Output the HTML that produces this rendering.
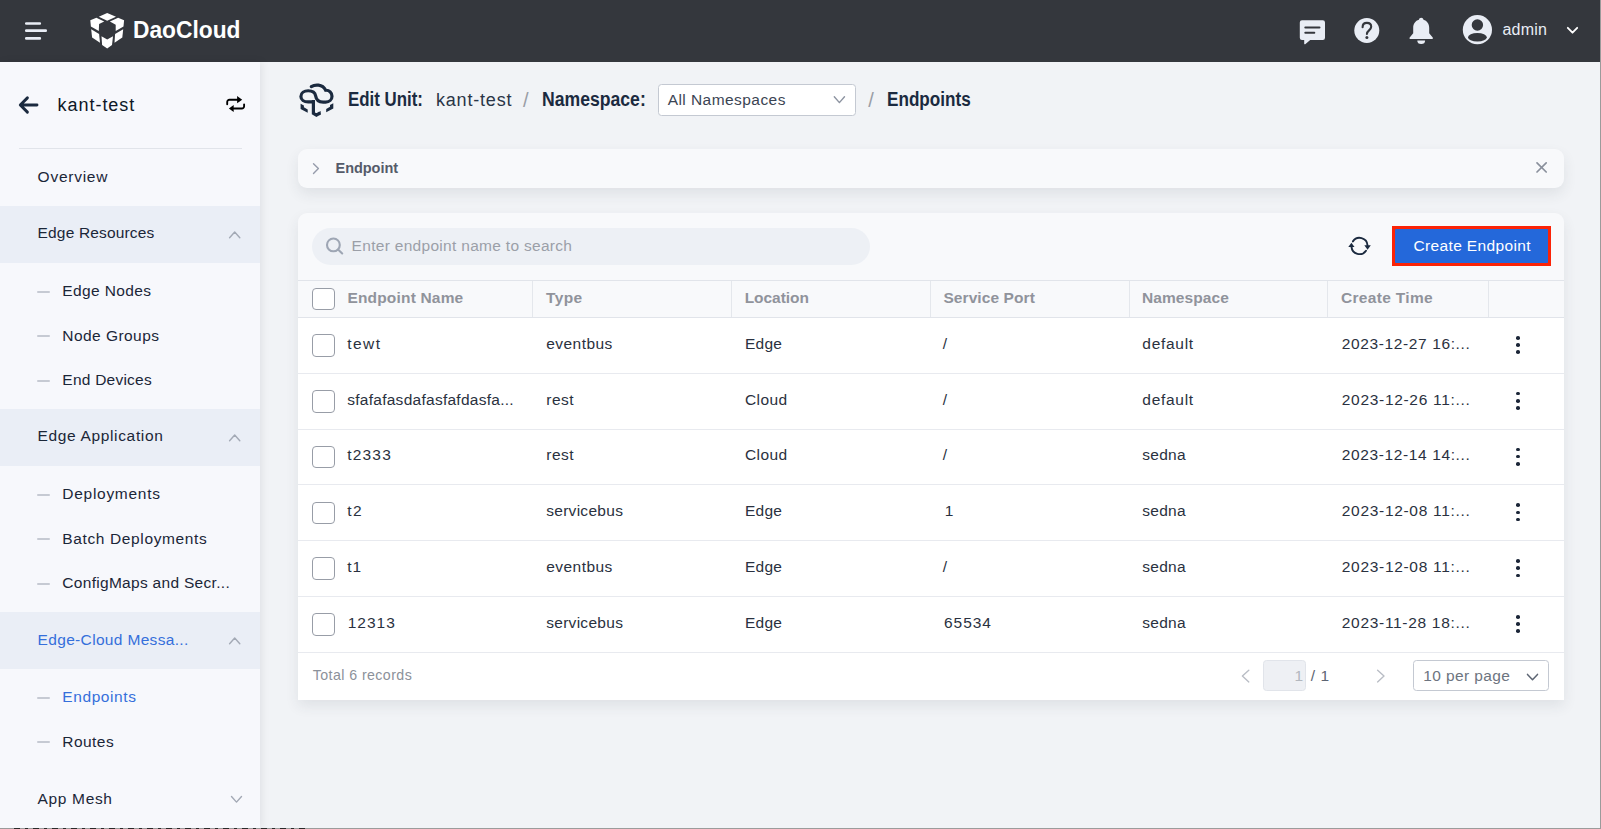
<!DOCTYPE html>
<html lang="en"><head><meta charset="utf-8"><title>Endpoints - DaoCloud</title>
<style>
html,body{margin:0;padding:0}
body{width:1601px;height:829px;overflow:hidden;position:relative;background:#f1f3f6;font-family:"Liberation Sans",sans-serif}
.a{position:absolute;box-sizing:border-box}
.t{position:absolute;white-space:pre;line-height:20px;height:20px}
svg{position:absolute;overflow:visible}
#hdr{left:0;top:0;width:1600px;height:62px;background:#34373d}
#side{left:0;top:62px;width:260px;height:766px;background:#f7f8fc;box-shadow:2px 0 8px rgba(20,20,30,.075)}
.band{left:0;width:260px;height:57px;background:#eaeef6}
.dash{width:13px;height:2.4px;border-radius:1.2px;background:#c6cad3}
.card{left:298px;width:1266px;background:#f8f9fb}
.cb{left:312px;width:23px;height:22.5px;border:1px solid #989da7;border-radius:4px;background:#fff}
.hl{background:#e3e6ec}
.dots i{position:absolute;left:0;width:3.6px;height:3.6px;border-radius:50%;background:#1b2638}

</style></head><body>
<div class="a" id="hdr"></div>
<div class="a" id="side"></div>
<div class="a" style="left:1600px;top:0;width:1px;height:829px;background:#9b9b9b"></div>
<div class="a" style="left:0;top:828px;width:1601px;height:1px;background:#9b9b9b"></div>
<div class="a" style="left:14px;top:828px;width:291px;height:1px;background:repeating-linear-gradient(90deg,#2a2a2a 0 6px,#9b9b9b 6px 11px,#2a2a2a 11px 14px,#9b9b9b 14px 19px)"></div>
<svg style="left:0;top:0" width="62" height="62" viewBox="0 0 62 62"><g stroke="#e9edf5" stroke-width="2.7" stroke-linecap="round"><path d="M26.3 23.5H39.8M26.3 30.7H45.7M26.3 38.4H39.8"/></g></svg>
<svg style="left:0;top:0" width="140" height="62" viewBox="0 0 140 62"><g fill="#fff"><polygon points="98.8,16.7 107.2,12.9 116,16.7 107.2,20.8"/><polygon points="90.3,20.2 96.4,17.8 104.2,21.4 99.1,24.1 98.8,31 90.9,26.5"/><polygon points="124.1,20.2 118.1,17.8 109.9,21.4 115.7,24.7 115.7,31 123.5,26.5"/><polygon points="91.2,29.2 99.1,34 100,42.8 92.1,37.4"/><polygon points="123.2,29.2 115.1,34 114.5,42.8 122.3,37.4"/><polygon points="101.5,36.2 107.2,39.5 113,36.2 112,44.9 107.2,48.5 102.1,44.9"/></g></svg>
<svg style="left:1290px;top:0" width="310" height="62" viewBox="1290 0 310 62"><path fill="#e9edf5" d="M1302 20.2h20.8a2.2 2.2 0 0 1 2.2 2.2v15.400a2.2 2.2 0 0 1-2.2 2.2h-12.600l-5 4.200a.6.6 0 0 1-1-.5V40h-2.200a2.2 2.2 0 0 1-2.200-2.200V22.400a2.2 2.2 0 0 1 2.200-2.200z"/><path stroke="#34373d" stroke-width="2" stroke-linecap="round" d="M1305.300 27.500h14.200M1305.300 32.800h9"/><circle cx="1366.800" cy="30.500" r="12.500" fill="#e9edf5"/><path fill="none" stroke="#34373d" stroke-width="2.100" stroke-linecap="round" d="M1362.600 27.200c0-2.600 1.800-4.300 4.300-4.300 2.500 0 4.300 1.600 4.300 3.900 0 3.300-4.300 3.800-4.300 7.100"/><circle cx="1366.900" cy="37.600" r="1.500" fill="#34373d"/><path fill="#e9edf5" d="M1421.200 17.800c1.200 0 2.100.8 2.300 1.900 3.500 1 5.700 4.100 5.700 8v5.600l3.500 4.200c.5.700.1 1.600-.8 1.600h-21.400c-.9 0-1.300-.9-.8-1.600l3.500-4.200v-5.600c0-3.900 2.200-7 5.700-8 .2-1.100 1.100-1.900 2.300-1.900z"/><path fill="#e9edf5" d="M1417.300 40.500h7.800a3.900 3.600 0 0 1-7.800 0z"/><circle cx="1477.400" cy="29.700" r="14.600" fill="#e9edf5"/><circle cx="1477.400" cy="25" r="5.700" fill="#34373d"/><ellipse cx="1477.400" cy="37.300" rx="9.400" ry="4.300" fill="#34373d"/><path fill="none" stroke="#fff" stroke-width="1.800" stroke-linecap="round" stroke-linejoin="round" d="M1567.800 27.800l4.700 4.900 4.700-4.900"/></svg>
<div class="a" style="left:19px;top:147.500px;width:223px;height:1px;background:#e1e4ea"></div>
<div class="a band" style="top:206px"></div>
<div class="a band" style="top:409px"></div>
<div class="a band" style="top:612px"></div>
<div class="a dash" style="left:37px;top:290.6px"></div>
<div class="a dash" style="left:37px;top:335.1px"></div>
<div class="a dash" style="left:37px;top:379.5px"></div>
<div class="a dash" style="left:37px;top:493.6px"></div>
<div class="a dash" style="left:37px;top:538.1px"></div>
<div class="a dash" style="left:37px;top:582.5px"></div>
<div class="a dash" style="left:37px;top:696.6px"></div>
<div class="a dash" style="left:37px;top:741.1px"></div>
<svg style="left:0;top:62px" width="260" height="766" viewBox="0 62 260 766"><path fill="none" stroke="#1b2a3f" stroke-width="2.9" stroke-linecap="round" stroke-linejoin="round" d="M37 105H20.400M27.400 97.900L20.300 105l7.100 7.100"/><g fill="none" stroke="#000" stroke-width="1.850" stroke-linecap="round"><path d="M227.200 104.200v-2.200a2.300 2.300 0 0 1 2.300-2.300h8"/><path d="M244.100 104.300v1.900a2.300 2.300 0 0 1-2.300 2.300h-8"/></g><polygon fill="#000" points="237.100,96.100 242.200,99.700 237.100,103.200"/><polygon fill="#000" points="233.700,105 228.900,108.500 233.700,112"/><path fill="none" stroke="#a3a9b5" stroke-width="1.400" stroke-linecap="round" stroke-linejoin="round" d="M229.600 237.7l5.100-5.700 5.100 5.700"/><path fill="none" stroke="#a3a9b5" stroke-width="1.400" stroke-linecap="round" stroke-linejoin="round" d="M229.600 440.7l5.100-5.700 5.100 5.700"/><path fill="none" stroke="#a3a9b5" stroke-width="1.400" stroke-linecap="round" stroke-linejoin="round" d="M229.600 643.7l5.100-5.700 5.100 5.700"/><path fill="none" stroke="#a3a9b5" stroke-width="1.400" stroke-linecap="round" stroke-linejoin="round" d="M231.500 796.500l5 5.600 5-5.600"/></svg>
<svg style="left:290px;top:76px" width="60" height="50" viewBox="290 76 60 50"><g fill="none" stroke="#1b2a3f" stroke-width="3.200"><path stroke-linecap="round" transform="translate(0,0.6) scale(1,0.985)" transform-origin="316 101" d="M311.300 85.800C313.500 84.400 316 84 318.500 84.300c3.200.4 5.800 2.400 7.200 5.200 3.500-.3 6.300 2.600 6.300 6 0 3.500-2.800 6-6.300 6h-2.500c-4 0-7-2.400-7.600-6.500-.6-3.400-3.100-5-7.400-5-3.900 0-7.300 2.100-7.300 5.700 0 3.500 3.200 5.600 7.300 5.600h4.600"/><path d="M313.400 100v13.300l3 1.800 3.700-2.300"/></g><g fill="#1b2a3f"><polygon points="300.600,103.800 303.900,105.600 303.900,107.300 307.700,109.400 307.700,112.800 300.600,108.900"/><polygon points="333.300,103.300 330,105.100 330,106.800 326.200,108.900 326.200,112.300 333.300,108.400"/><polygon points="318.800,112.200 320.700,111.100 320.700,114.500 318.800,115.600"/></g></svg>
<div class="a" style="left:658px;top:84px;width:198px;height:32px;border:1px solid #c4c9d2;border-radius:3.500px;background:#fff"></div>
<svg style="left:830px;top:92px" width="20" height="16" viewBox="830 92 20 16"><path fill="none" stroke="#8d94a1" stroke-width="1.400" stroke-linecap="round" stroke-linejoin="round" d="M834.300 96.700l5.100 5.900 5.100-5.900"/></svg>
<div class="a card" style="top:149px;height:39px;border-radius:9px;box-shadow:0 6px 14px rgba(40,50,70,.09)"></div>
<svg style="left:305px;top:155px" width="30" height="30" viewBox="305 155 30 30"><path fill="none" stroke="#969cab" stroke-width="1.400" stroke-linecap="round" stroke-linejoin="round" d="M313.500 163.700l4.900 4.900-4.900 4.900"/></svg>
<svg style="left:1530px;top:155px" width="30" height="30" viewBox="1530 155 30 30"><path fill="none" stroke="#8a909c" stroke-width="1.700" stroke-linecap="round" d="M1537 162.800l9.200 9.200M1546.200 162.800l-9.200 9.200"/></svg>
<div class="a card" style="top:213px;height:487px;border-radius:9px 9px 0 0;box-shadow:0 6px 14px rgba(40,50,70,.09)"></div>
<div class="a" style="left:312px;top:228px;width:558px;height:37px;border-radius:18.500px;background:#edf0f5"></div>
<svg style="left:320px;top:232px" width="30" height="30" viewBox="320 232 30 30"><g fill="none" stroke="#9ea6b4" stroke-width="2.100" stroke-linecap="round"><circle cx="333.400" cy="244.900" r="6.400"/><path d="M338.300 249.800l3.900 3.700"/></g></svg>
<svg style="left:1340px;top:228px" width="40" height="36" viewBox="1340 228 40 36"><g fill="none" stroke="#1b2a3f" stroke-width="1.900" stroke-linecap="round"><path d="M1352.900 241.400A8 8 0 0 1 1367.500 245.400"/><path d="M1366 250.700A8 8 0 0 1 1351.500 246.800"/></g><polygon fill="#1b2a3f" points="1364.300,245.200 1370.800,245.200 1367.600,249.700"/><polygon fill="#1b2a3f" points="1348.300,246.900 1354.500,246.900 1351.400,242.700"/></svg>
<div class="a" style="left:1392px;top:226px;width:159px;height:40px;background:#fb2307"></div>
<div class="a" style="left:1395px;top:229px;width:153px;height:34px;background:#2468da;border-radius:1px"></div>
<div class="a" style="left:298px;top:280px;width:1266px;height:38px;background:#f8f9fb;border-top:1px solid #e1e4ea;border-bottom:1px solid #e1e4ea"></div>
<div class="a" style="left:532px;top:281px;width:1px;height:36px;background:#e4e7ec"></div>
<div class="a" style="left:731px;top:281px;width:1px;height:36px;background:#e4e7ec"></div>
<div class="a" style="left:930px;top:281px;width:1px;height:36px;background:#e4e7ec"></div>
<div class="a" style="left:1128.5px;top:281px;width:1px;height:36px;background:#e4e7ec"></div>
<div class="a" style="left:1327px;top:281px;width:1px;height:36px;background:#e4e7ec"></div>
<div class="a" style="left:1488px;top:281px;width:1px;height:36px;background:#e4e7ec"></div>
<div class="a" style="left:298px;top:318px;width:1266px;height:382px;background:#fff"></div>
<div class="a" style="left:298px;top:372.7px;width:1266px;height:1px;background:#e8eaef"></div>
<div class="a" style="left:298px;top:428.5px;width:1266px;height:1px;background:#e8eaef"></div>
<div class="a" style="left:298px;top:484.3px;width:1266px;height:1px;background:#e8eaef"></div>
<div class="a" style="left:298px;top:540.1px;width:1266px;height:1px;background:#e8eaef"></div>
<div class="a" style="left:298px;top:595.9px;width:1266px;height:1px;background:#e8eaef"></div>
<div class="a" style="left:298px;top:651.7px;width:1266px;height:1px;background:#e8eaef"></div>
<div class="a cb" style="top:287.700px"></div>
<div class="a cb" style="top:334.2px"></div>
<div class="a dots" style="left:1516.200px;top:336.0px;width:4px;height:18px"><i style="top:0"></i><i style="top:7.200px"></i><i style="top:14.400px"></i></div>
<div class="a cb" style="top:390.0px"></div>
<div class="a dots" style="left:1516.200px;top:391.8px;width:4px;height:18px"><i style="top:0"></i><i style="top:7.200px"></i><i style="top:14.400px"></i></div>
<div class="a cb" style="top:445.8px"></div>
<div class="a dots" style="left:1516.200px;top:447.6px;width:4px;height:18px"><i style="top:0"></i><i style="top:7.200px"></i><i style="top:14.400px"></i></div>
<div class="a cb" style="top:501.6px"></div>
<div class="a dots" style="left:1516.200px;top:503.4px;width:4px;height:18px"><i style="top:0"></i><i style="top:7.200px"></i><i style="top:14.400px"></i></div>
<div class="a cb" style="top:557.4px"></div>
<div class="a dots" style="left:1516.200px;top:559.2px;width:4px;height:18px"><i style="top:0"></i><i style="top:7.200px"></i><i style="top:14.400px"></i></div>
<div class="a cb" style="top:613.2px"></div>
<div class="a dots" style="left:1516.200px;top:615.0px;width:4px;height:18px"><i style="top:0"></i><i style="top:7.200px"></i><i style="top:14.400px"></i></div>
<svg style="left:1235px;top:660px" width="160" height="32" viewBox="1235 660 160 32"><g fill="none" stroke="#b9bdc5" stroke-width="1.400" stroke-linecap="round" stroke-linejoin="round"><path d="M1248.800 670.300l-6.400 5.800 6.400 5.800"/><path d="M1377.600 670.300l6.400 5.800-6.400 5.800"/></g></svg>
<div class="a" style="left:1263.400px;top:660.300px;width:42.300px;height:31.200px;border:1px solid #e1e4ea;border-radius:3.500px;background:#eef0f4"></div>
<div class="a" style="left:1413.200px;top:660.300px;width:135.500px;height:31.200px;border:1px solid #c4c9d2;border-radius:3.500px;background:#fff"></div>
<svg style="left:1520px;top:668px" width="24" height="16" viewBox="1520 668 24 16"><path fill="none" stroke="#5d6573" stroke-width="1.500" stroke-linecap="round" stroke-linejoin="round" d="M1527.500 674.400l5 5.300 5-5.300"/></svg>
<!-- text layer -->
<div class="t" style="left:133.0px;top:19.8px;font-size:24.6px;color:#ffffff;font-weight:700;transform:scaleX(0.9257);transform-origin:0 0;">DaoCloud</div>
<div class="t" style="left:1502.4px;top:19.6px;font-size:16px;color:#e9edf5;letter-spacing:0.24px;">admin</div>
<div class="t" style="left:57.6px;top:94.7px;font-size:18px;color:#0e1726;letter-spacing:0.96px;">kant-test</div>
<div class="t" style="left:37.6px;top:166.5px;font-size:15.5px;color:#1b2638;letter-spacing:0.74px;">Overview</div>
<div class="t" style="left:37.6px;top:223.0px;font-size:15.5px;color:#1b2638;letter-spacing:0.16px;">Edge Resources</div>
<div class="t" style="left:62.3px;top:280.7px;font-size:15.5px;color:#1b2638;letter-spacing:0.38px;">Edge Nodes</div>
<div class="t" style="left:62.3px;top:325.9px;font-size:15.5px;color:#1b2638;letter-spacing:0.45px;">Node Groups</div>
<div class="t" style="left:62.3px;top:369.6px;font-size:15.5px;color:#1b2638;letter-spacing:0.24px;">End Devices</div>
<div class="t" style="left:37.6px;top:426.0px;font-size:15.5px;color:#1b2638;letter-spacing:0.65px;">Edge Application</div>
<div class="t" style="left:62.3px;top:483.7px;font-size:15.5px;color:#1b2638;letter-spacing:0.72px;">Deployments</div>
<div class="t" style="left:62.3px;top:529.0px;font-size:15.5px;color:#1b2638;letter-spacing:0.63px;">Batch Deployments</div>
<div class="t" style="left:62.3px;top:572.6px;font-size:15.5px;color:#1b2638;letter-spacing:0.30px;">ConfigMaps and Secr...</div>
<div class="t" style="left:37.6px;top:629.9px;font-size:15.5px;color:#356fdb;letter-spacing:0.33px;">Edge-Cloud Messa...</div>
<div class="t" style="left:62.3px;top:686.6px;font-size:15.5px;color:#356fdb;letter-spacing:0.59px;">Endpoints</div>
<div class="t" style="left:62.3px;top:732.1px;font-size:15.5px;color:#1b2638;letter-spacing:0.45px;">Routes</div>
<div class="t" style="left:37.6px;top:788.8px;font-size:15.5px;color:#1b2638;letter-spacing:0.65px;">App Mesh</div>
<div class="t" style="left:347.8px;top:88.9px;font-size:19.5px;color:#1b2a40;font-weight:700;transform:scaleX(0.8643);transform-origin:0 0;">Edit Unit:</div>
<div class="t" style="left:436.0px;top:89.6px;font-size:18px;color:#2a3547;letter-spacing:0.80px;">kant-test</div>
<div class="t" style="left:522.9px;top:89.5px;font-size:20px;color:#9a9ea6;">/</div>
<div class="t" style="left:541.9px;top:88.9px;font-size:19.5px;color:#1b2a40;font-weight:700;transform:scaleX(0.9033);transform-origin:0 0;">Namespace:</div>
<div class="t" style="left:667.7px;top:89.7px;font-size:15.5px;color:#3b4453;letter-spacing:0.44px;">All Namespaces</div>
<div class="t" style="left:868.3px;top:89.5px;font-size:20px;color:#9a9ea6;">/</div>
<div class="t" style="left:887.3px;top:88.9px;font-size:19.5px;color:#1b2a40;font-weight:700;transform:scaleX(0.8780);transform-origin:0 0;">Endpoints</div>
<div class="t" style="left:335.5px;top:158.3px;font-size:14.5px;color:#555b69;font-weight:700;letter-spacing:-0.04px;">Endpoint</div>
<div class="t" style="left:351.6px;top:236.3px;font-size:15.5px;color:#9b9fa8;letter-spacing:0.30px;">Enter endpoint name to search</div>
<div class="t" style="left:1413.4px;top:235.9px;font-size:15.5px;color:#ffffff;letter-spacing:0.37px;">Create Endpoint</div>
<div class="t" style="left:347.4px;top:288.1px;font-size:15.5px;color:#90939b;font-weight:700;letter-spacing:0.18px;">Endpoint Name</div>
<div class="t" style="left:546.0px;top:288.1px;font-size:15.5px;color:#90939b;font-weight:700;letter-spacing:0.37px;">Type</div>
<div class="t" style="left:744.7px;top:288.1px;font-size:15.5px;color:#90939b;font-weight:700;letter-spacing:-0.04px;">Location</div>
<div class="t" style="left:943.4px;top:288.1px;font-size:15.5px;color:#90939b;font-weight:700;letter-spacing:0.09px;">Service Port</div>
<div class="t" style="left:1142.0px;top:288.1px;font-size:15.5px;color:#90939b;font-weight:700;letter-spacing:0.09px;">Namespace</div>
<div class="t" style="left:1341.0px;top:288.1px;font-size:15.5px;color:#90939b;font-weight:700;letter-spacing:0.32px;">Create Time</div>
<div class="t" style="left:347.2px;top:333.8px;font-size:15.5px;color:#2a3140;letter-spacing:1.44px;">tewt</div>
<div class="t" style="left:546.2px;top:333.8px;font-size:15.5px;color:#2a3140;letter-spacing:0.46px;">eventbus</div>
<div class="t" style="left:744.9px;top:333.8px;font-size:15.5px;color:#2a3140;letter-spacing:0.27px;">Edge</div>
<div class="t" style="left:942.7px;top:333.8px;font-size:15.5px;color:#2a3140;">/</div>
<div class="t" style="left:1142.3px;top:333.8px;font-size:15.5px;color:#2a3140;letter-spacing:0.72px;">default</div>
<div class="t" style="left:1341.8px;top:333.8px;font-size:15.5px;color:#2a3140;letter-spacing:0.62px;">2023-12-27 16:...</div>
<div class="t" style="left:347.2px;top:389.6px;font-size:15.5px;color:#2a3140;letter-spacing:0.27px;">sfafafasdafasfafdasfa...</div>
<div class="t" style="left:546.2px;top:389.6px;font-size:15.5px;color:#2a3140;letter-spacing:0.54px;">rest</div>
<div class="t" style="left:744.9px;top:389.6px;font-size:15.5px;color:#2a3140;letter-spacing:0.44px;">Cloud</div>
<div class="t" style="left:942.7px;top:389.6px;font-size:15.5px;color:#2a3140;">/</div>
<div class="t" style="left:1142.3px;top:389.6px;font-size:15.5px;color:#2a3140;letter-spacing:0.72px;">default</div>
<div class="t" style="left:1341.8px;top:389.6px;font-size:15.5px;color:#2a3140;letter-spacing:0.69px;">2023-12-26 11:...</div>
<div class="t" style="left:347.2px;top:445.4px;font-size:15.5px;color:#2a3140;letter-spacing:1.20px;">t2333</div>
<div class="t" style="left:546.2px;top:445.4px;font-size:15.5px;color:#2a3140;letter-spacing:0.54px;">rest</div>
<div class="t" style="left:744.9px;top:445.4px;font-size:15.5px;color:#2a3140;letter-spacing:0.44px;">Cloud</div>
<div class="t" style="left:942.7px;top:445.4px;font-size:15.5px;color:#2a3140;">/</div>
<div class="t" style="left:1142.3px;top:445.4px;font-size:15.5px;color:#2a3140;letter-spacing:0.25px;">sedna</div>
<div class="t" style="left:1341.8px;top:445.4px;font-size:15.5px;color:#2a3140;letter-spacing:0.62px;">2023-12-14 14:...</div>
<div class="t" style="left:347.2px;top:501.2px;font-size:15.5px;color:#2a3140;letter-spacing:1.43px;">t2</div>
<div class="t" style="left:546.2px;top:501.2px;font-size:15.5px;color:#2a3140;letter-spacing:0.29px;">servicebus</div>
<div class="t" style="left:744.9px;top:501.2px;font-size:15.5px;color:#2a3140;letter-spacing:0.27px;">Edge</div>
<div class="t" style="left:944.7px;top:501.2px;font-size:15.5px;color:#2a3140;">1</div>
<div class="t" style="left:1142.3px;top:501.2px;font-size:15.5px;color:#2a3140;letter-spacing:0.25px;">sedna</div>
<div class="t" style="left:1341.8px;top:501.2px;font-size:15.5px;color:#2a3140;letter-spacing:0.69px;">2023-12-08 11:...</div>
<div class="t" style="left:347.2px;top:557.0px;font-size:15.5px;color:#2a3140;letter-spacing:1.03px;">t1</div>
<div class="t" style="left:546.2px;top:557.0px;font-size:15.5px;color:#2a3140;letter-spacing:0.46px;">eventbus</div>
<div class="t" style="left:744.9px;top:557.0px;font-size:15.5px;color:#2a3140;letter-spacing:0.27px;">Edge</div>
<div class="t" style="left:942.7px;top:557.0px;font-size:15.5px;color:#2a3140;">/</div>
<div class="t" style="left:1142.3px;top:557.0px;font-size:15.5px;color:#2a3140;letter-spacing:0.25px;">sedna</div>
<div class="t" style="left:1341.8px;top:557.0px;font-size:15.5px;color:#2a3140;letter-spacing:0.69px;">2023-12-08 11:...</div>
<div class="t" style="left:347.7px;top:612.8px;font-size:15.5px;color:#2a3140;letter-spacing:1.00px;">12313</div>
<div class="t" style="left:546.2px;top:612.8px;font-size:15.5px;color:#2a3140;letter-spacing:0.29px;">servicebus</div>
<div class="t" style="left:744.9px;top:612.8px;font-size:15.5px;color:#2a3140;letter-spacing:0.27px;">Edge</div>
<div class="t" style="left:943.9px;top:612.8px;font-size:15.5px;color:#2a3140;letter-spacing:1.00px;">65534</div>
<div class="t" style="left:1142.3px;top:612.8px;font-size:15.5px;color:#2a3140;letter-spacing:0.25px;">sedna</div>
<div class="t" style="left:1341.8px;top:612.8px;font-size:15.5px;color:#2a3140;letter-spacing:0.69px;">2023-11-28 18:...</div>
<div class="t" style="left:312.8px;top:665.1px;font-size:14.2px;color:#8c919a;letter-spacing:0.42px;">Total 6 records</div>
<div class="t" style="left:1294.4px;top:665.7px;font-size:15.5px;color:#b3b7be;">1</div>
<div class="t" style="left:1310.7px;top:665.7px;font-size:15.5px;color:#5d6573;letter-spacing:0.56px;">/ 1</div>
<div class="t" style="left:1423.2px;top:665.7px;font-size:15.5px;color:#6d7480;letter-spacing:0.39px;">10 per page</div>
</body></html>
